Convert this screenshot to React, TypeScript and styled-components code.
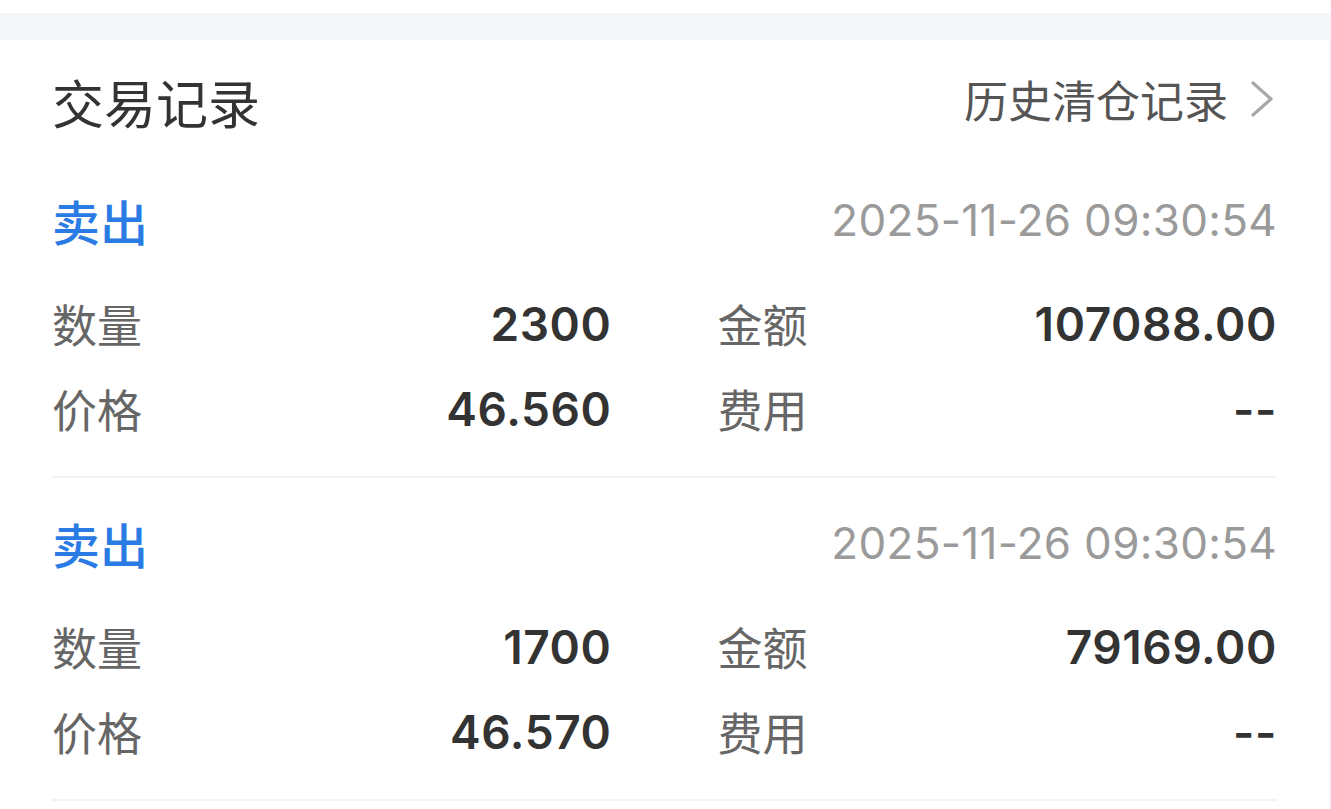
import React from "react";
import styled, { createGlobalStyle } from "styled-components";

type Trade = {
  side: string;
  time: string;
  qty: string;
  amount: string;
  price: string;
  fee: string;
};

const trades: Trade[] = [
  { side: "卖出", time: "2025-11-26 09:30:54", qty: "2300", amount: "107088.00", price: "46.560", fee: "--" },
  { side: "卖出", time: "2025-11-26 09:30:54", qty: "1700", amount: "79169.00", price: "46.570", fee: "--" },
];

const App = () => {
  return (
    <Page>
      <GlobalStyle />
      <TopStrip />
      <Gap />
      <Card>
        <Header>
          <Title>交易记录</Title>
          <HistoryLink>
            历史清仓记录
            <Chevron viewBox="0 0 24 38">
              <path d="M3 3 L21 19 L3 35" />
            </Chevron>
          </HistoryLink>
        </Header>
        {trades.map((t, i) => (
          <Record key={i}>
            <RecordHead>
              <Side>{t.side}</Side>
              <Time>{t.time}</Time>
            </RecordHead>
            <Fields>
              <Field>
                <Label>数量</Label>
                <Value>{t.qty}</Value>
              </Field>
              <Field>
                <Label>金额</Label>
                <Value>{t.amount}</Value>
              </Field>
              <Field>
                <Label>价格</Label>
                <Value>{t.price}</Value>
              </Field>
              <Field>
                <Label>费用</Label>
                <Value>{t.fee}</Value>
              </Field>
            </Fields>
          </Record>
        ))}
      </Card>
    </Page>
  );
};

const GlobalStyle = createGlobalStyle`
    html, body {
        margin: 0;
        padding: 0;
        background: #f5f6f8;
    }
    body {
        font-family: Inter, "Noto Sans CJK SC", sans-serif;
    }
`;

const Page = styled.div`
    width: 1331px;
    height: 809px;
    overflow: hidden;
    background: #f5f6f8;
`;

const TopStrip = styled.div`
    height: 13px;
    background: #ffffff;
`;

const Gap = styled.div`
    height: 27px;
`;

const Card = styled.div`
    background: #ffffff;
    margin-right: 2px;
    padding: 0 52px;
    height: 769px;
`;

const Header = styled.div`
    height: 115px;
    box-sizing: border-box;
    padding-top: 32px;
    display: flex;
    justify-content: space-between;
    align-items: flex-start;
`;

const Title = styled.div`
    font-size: 52px;
    line-height: 60px;
    color: #333333;
    font-family: "Noto Sans CJK SC", sans-serif;
`;

const HistoryLink = styled.div`
    display: flex;
    align-items: center;
    gap: 22px;
    font-size: 44px;
    line-height: 60px;
    color: #555555;
    font-family: "Noto Sans CJK SC", sans-serif;
    margin-top: -3px;
    margin-right: 3px;
`;

const Chevron = styled.svg`
    width: 24px;
    height: 38px;
    fill: none;
    stroke: #a8a8a8;
    stroke-width: 3.2;
    stroke-linecap: round;
    stroke-linejoin: round;
`;

const Record = styled.div`
    padding: 22px 0 25px;
    border-bottom: 2px solid #f3f3f3;
`;

const RecordHead = styled.div`
    height: 86px;
    margin-bottom: 18px;
    display: flex;
    justify-content: space-between;
    align-items: center;
`;

const Side = styled.div`
    font-size: 48px;
    font-weight: 500;
    color: #2b7be4;
    font-family: "Noto Sans CJK SC", sans-serif;
`;

const Time = styled.div`
    font-size: 44px;
    color: #9a9a9a;
    letter-spacing: 0.3px;
`;

const Fields = styled.div`
    display: grid;
    grid-template-columns: 1fr 1fr;
    column-gap: 106px;
`;

const Field = styled.div`
    height: 85px;
    display: flex;
    justify-content: space-between;
    align-items: center;
`;

const Label = styled.div`
    font-size: 45px;
    color: #666666;
    font-family: "Noto Sans CJK SC", sans-serif;
`;

const Value = styled.div`
    font-size: 46px;
    font-weight: 600;
    color: #333333;
    letter-spacing: 0.6px;
`;

export default App;
